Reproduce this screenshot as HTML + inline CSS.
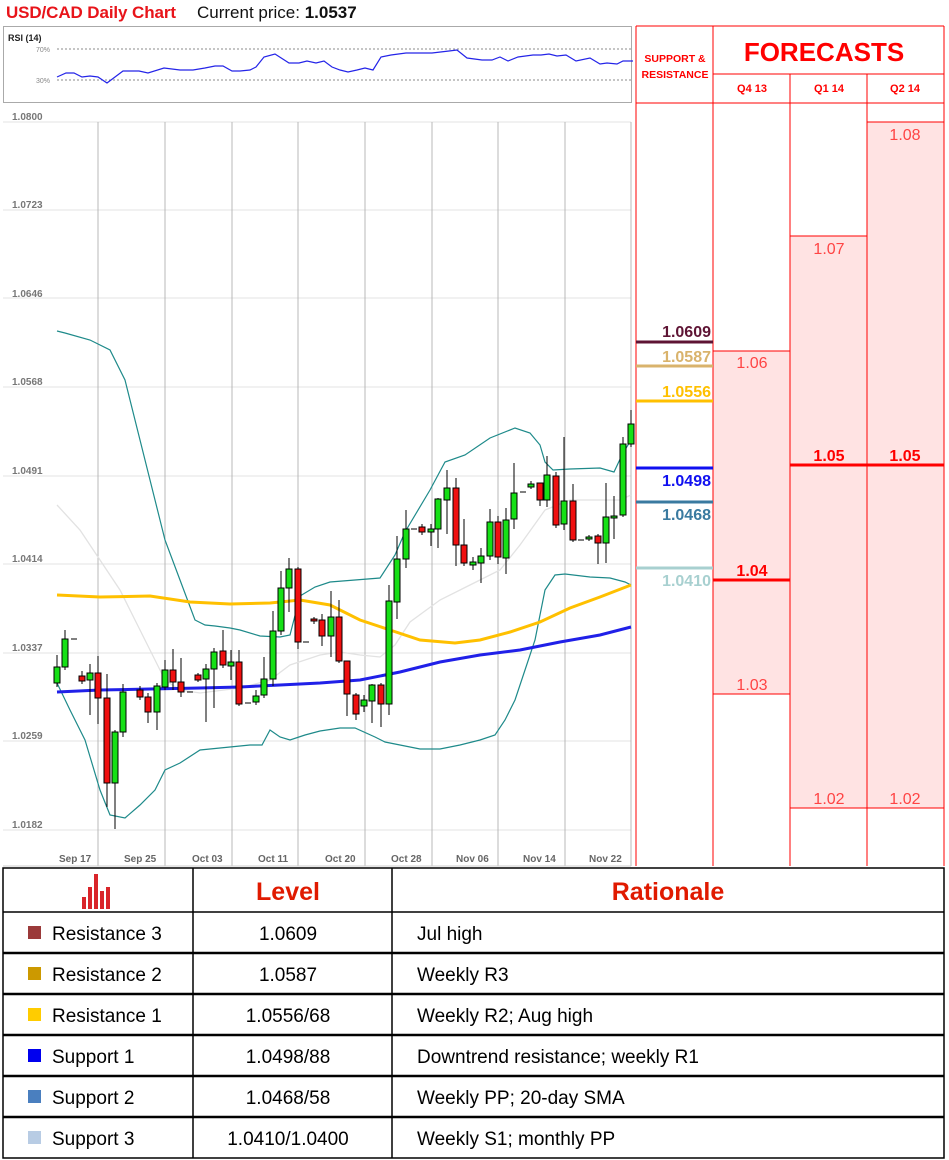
<!DOCTYPE html>
<html><head><meta charset="utf-8"><style>
body{margin:0;background:#fff;width:949px;height:1160px;overflow:hidden;font-family:"Liberation Sans",sans-serif}
svg{position:absolute;left:0;top:0}
</style></head><body>
<svg width="949" height="1160" viewBox="0 0 949 1160" xmlns="http://www.w3.org/2000/svg" font-family="Liberation Sans, sans-serif">
<text x="6" y="18" font-size="17" fill="#e8141a" font-weight="bold" textLength="170">USD/CAD Daily Chart</text>
<text x="197" y="18" font-size="17" fill="#111">Current price: <tspan font-weight="bold">1.0537</tspan></text>
<!-- RSI -->
<rect x="3.5" y="26.5" width="628" height="76" fill="#fff" stroke="#aaa"/>
<text x="8" y="41" font-size="9" font-weight="bold" fill="#222">RSI (14)</text>
<text x="36" y="52" font-size="7" fill="#888">70%</text>
<text x="36" y="83" font-size="7" fill="#888">30%</text>
<line x1="57" y1="49" x2="631" y2="49" stroke="#666" stroke-dasharray="2,2" stroke-width="0.8"/>
<line x1="57" y1="80" x2="631" y2="80" stroke="#666" stroke-dasharray="2,2" stroke-width="0.8"/>
<polyline fill="none" stroke="#2424e8" stroke-width="1.2" points="57,77 66,73 74,73 82,77 90,76 98,77 107,83 123,71 139,71 148,73 164,68 180,70 193,70 205,68 215,66 223,66 232,71 240,71 250,70 256,67 264,57 275,54 289,63 299,63 307,61 316,63 324,61 332,67 340,70 348,72 357,70 365,68 373,70 381,57 391,55 406,53 418,53 432,53 449,51 457,50 467,58 482,60 492,60 500,57 508,61 518,57 533,55 541,55 549,54 557,56 566,55 576,61 590,58 600,64 607,63 617,64 623,61 633,61"/>
<!-- chart grid -->
<g stroke="#e3e3e3" stroke-width="1">
<line x1="3" y1="122" x2="631" y2="122"/><line x1="3" y1="210" x2="631" y2="210"/><line x1="3" y1="298" x2="631" y2="298"/><line x1="3" y1="387" x2="631" y2="387"/><line x1="3" y1="476" x2="631" y2="476"/><line x1="3" y1="564" x2="631" y2="564"/><line x1="3" y1="653" x2="631" y2="653"/><line x1="3" y1="741" x2="631" y2="741"/><line x1="3" y1="830" x2="631" y2="830"/>
</g>
<g stroke="#b8b8b8" stroke-width="1">
<line x1="98" y1="122" x2="98" y2="866"/><line x1="165" y1="122" x2="165" y2="866"/><line x1="232" y1="122" x2="232" y2="866"/><line x1="298" y1="122" x2="298" y2="866"/><line x1="365" y1="122" x2="365" y2="866"/><line x1="432" y1="122" x2="432" y2="866"/><line x1="498" y1="122" x2="498" y2="866"/><line x1="565" y1="122" x2="565" y2="866"/><line x1="631" y1="122" x2="631" y2="866"/>
</g>
<line x1="3" y1="866" x2="631" y2="866" stroke="#ccc"/>
<g font-size="10" fill="#777" font-weight="bold">
<text x="12" y="120">1.0800</text><text x="12" y="208">1.0723</text><text x="12" y="297">1.0646</text><text x="12" y="385">1.0568</text><text x="12" y="474">1.0491</text><text x="12" y="562">1.0414</text><text x="12" y="651">1.0337</text><text x="12" y="739">1.0259</text><text x="12" y="828">1.0182</text>
</g>
<g font-size="10" fill="#666" font-weight="bold">
<text x="59" y="862">Sep 17</text><text x="124" y="862">Sep 25</text><text x="192" y="862">Oct 03</text><text x="258" y="862">Oct 11</text><text x="325" y="862">Oct 20</text><text x="391" y="862">Oct 28</text><text x="456" y="862">Nov 06</text><text x="523" y="862">Nov 14</text><text x="589" y="862">Nov 22</text>
</g>
<!-- indicators -->
<polyline fill="none" stroke="#e2e2e2" stroke-width="1.3" points="57,505 80,530 100,560 120,590 140,630 155,660 165,680 180,690 200,693 240,688 270,680 290,665 320,655 340,652 360,655 380,657 395,645 410,622 440,600 470,585 500,570 520,545 545,510 570,500 600,500 620,500 631,495"/>
<polyline fill="none" stroke="#1e8a8a" stroke-width="1.2" points="57,331 65,333 90,340 110,350 125,380 140,440 155,500 165,540 180,580 195,620 205,625 215,626 230,628 240,630 260,636 280,637 290,635 300,596 315,587 330,582 355,580 380,578 395,555 405,532 430,490 445,462 465,455 490,438 515,428 530,433 540,445 545,462 553,470 570,469 600,468 614,472 622,455 631,440"/>
<polyline fill="none" stroke="#1e8a8a" stroke-width="1.2" points="57,683 70,710 85,740 100,790 110,815 125,818 140,805 155,790 165,770 180,763 200,750 220,748 250,745 262,745 270,730 280,737 290,740 305,735 320,731 340,728 355,728 375,737 385,742 400,745 420,749 440,749 460,745 480,740 495,735 505,720 515,700 525,670 535,640 545,590 555,575 565,574 590,577 610,578 625,582 631,585"/>
<polyline fill="none" stroke="#ffc000" stroke-width="3" points="57,595 100,597 150,596 190,602 230,604 270,603 300,600 330,605 360,620 390,630 420,640 455,643 480,640 510,632 540,622 570,608 600,597 631,585"/>
<polyline fill="none" stroke="#2020e8" stroke-width="3" points="57,692 100,690 150,689 200,688 240,687 280,685 320,683 360,680 400,672 440,662 480,655 520,650 560,642 600,635 631,627"/>
<!-- candles -->
<g stroke="#000" stroke-width="1">
<line x1="57" y1="655" x2="57" y2="687"/><line x1="65" y1="630" x2="65" y2="670"/><line x1="82" y1="671" x2="82" y2="684"/><line x1="90" y1="664" x2="90" y2="715"/><line x1="98" y1="656" x2="98" y2="724"/><line x1="107" y1="674" x2="107" y2="807"/><line x1="115" y1="730" x2="115" y2="829"/><line x1="123" y1="684" x2="123" y2="737"/><line x1="140" y1="686" x2="140" y2="700"/><line x1="148" y1="693" x2="148" y2="723"/><line x1="157" y1="683" x2="157" y2="730"/><line x1="165" y1="660" x2="165" y2="690"/><line x1="173" y1="649" x2="173" y2="690"/><line x1="181" y1="658" x2="181" y2="697"/><line x1="198" y1="673" x2="198" y2="682"/><line x1="206" y1="664" x2="206" y2="722"/><line x1="214" y1="648" x2="214" y2="708"/><line x1="223" y1="630" x2="223" y2="668"/><line x1="231" y1="650" x2="231" y2="680"/><line x1="239" y1="650" x2="239" y2="706"/><line x1="256" y1="690" x2="256" y2="705"/><line x1="264" y1="657" x2="264" y2="698"/><line x1="273" y1="611" x2="273" y2="686"/><line x1="281" y1="571" x2="281" y2="635"/><line x1="289" y1="558" x2="289" y2="612"/><line x1="298" y1="567" x2="298" y2="649"/><line x1="314" y1="617" x2="314" y2="624"/><line x1="322" y1="614" x2="322" y2="646"/><line x1="331" y1="591" x2="331" y2="657"/><line x1="339" y1="600" x2="339" y2="663"/><line x1="347" y1="661" x2="347" y2="716"/><line x1="356" y1="693" x2="356" y2="720"/><line x1="364" y1="695" x2="364" y2="712"/><line x1="372" y1="684" x2="372" y2="723"/><line x1="381" y1="683" x2="381" y2="727"/><line x1="389" y1="585" x2="389" y2="715"/><line x1="397" y1="536" x2="397" y2="619"/><line x1="406" y1="510" x2="406" y2="568"/><line x1="422" y1="524" x2="422" y2="535"/><line x1="431" y1="524" x2="431" y2="546"/><line x1="438" y1="498" x2="438" y2="548"/><line x1="447" y1="470" x2="447" y2="534"/><line x1="456" y1="478" x2="456" y2="566"/><line x1="464" y1="519" x2="464" y2="566"/><line x1="473" y1="557" x2="473" y2="570"/><line x1="481" y1="548" x2="481" y2="583"/><line x1="490" y1="509" x2="490" y2="560"/><line x1="498" y1="516" x2="498" y2="564"/><line x1="506" y1="508" x2="506" y2="574"/><line x1="514" y1="463" x2="514" y2="529"/><line x1="531" y1="481" x2="531" y2="489"/><line x1="540" y1="483" x2="540" y2="506"/><line x1="547" y1="456" x2="547" y2="507"/><line x1="556" y1="472" x2="556" y2="528"/><line x1="564" y1="437" x2="564" y2="530"/><line x1="573" y1="484" x2="573" y2="542"/><line x1="589" y1="535" x2="589" y2="541"/><line x1="598" y1="534" x2="598" y2="564"/><line x1="606" y1="483" x2="606" y2="563"/><line x1="614" y1="496" x2="614" y2="539"/><line x1="623" y1="437" x2="623" y2="517"/><line x1="631" y1="410" x2="631" y2="447"/>
<line x1="71" y1="639" x2="77" y2="639"/><line x1="187" y1="692" x2="193" y2="692"/><line x1="245" y1="703" x2="251" y2="703"/><line x1="303" y1="642" x2="309" y2="642"/><line x1="411" y1="529" x2="417" y2="529"/><line x1="520" y1="492" x2="526" y2="492"/><line x1="578" y1="540" x2="584" y2="540"/>
</g>
<g stroke="#000" stroke-width="1" fill="#16e016">
<rect x="54" y="667" width="6" height="16"/><rect x="62" y="639" width="6" height="28"/><rect x="87" y="673" width="6" height="7"/><rect x="112" y="732" width="6" height="51"/><rect x="120" y="692" width="6" height="40"/><rect x="154" y="686" width="6" height="26"/><rect x="162" y="670" width="6" height="17"/><rect x="203" y="669" width="6" height="10"/><rect x="211" y="652" width="6" height="17"/><rect x="228" y="662" width="6" height="4"/><rect x="253" y="696" width="6" height="6"/><rect x="261" y="679" width="6" height="16"/><rect x="270" y="631" width="6" height="48"/><rect x="278" y="588" width="6" height="43"/><rect x="286" y="569" width="6" height="19"/><rect x="328" y="617" width="6" height="19"/><rect x="361" y="700" width="6" height="6"/><rect x="369" y="685" width="6" height="16"/><rect x="386" y="601" width="6" height="103"/><rect x="394" y="559" width="6" height="43"/><rect x="403" y="529" width="6" height="30"/><rect x="428" y="529" width="6" height="3"/><rect x="435" y="499" width="6" height="30"/><rect x="444" y="488" width="6" height="12"/><rect x="470" y="562" width="6" height="3"/><rect x="478" y="556" width="6" height="7"/><rect x="487" y="522" width="6" height="34"/><rect x="503" y="520" width="6" height="38"/><rect x="511" y="493" width="6" height="26"/><rect x="528" y="484" width="6" height="3"/><rect x="544" y="475" width="6" height="25"/><rect x="561" y="501" width="6" height="23"/><rect x="586" y="537" width="6" height="2"/><rect x="603" y="517" width="6" height="26"/><rect x="611" y="516" width="6" height="2"/><rect x="620" y="444" width="6" height="71"/><rect x="628" y="424" width="6" height="20"/>
</g>
<g stroke="#000" stroke-width="1" fill="#f01010">
<rect x="79" y="676" width="6" height="5"/><rect x="95" y="673" width="6" height="25"/><rect x="104" y="698" width="6" height="85"/><rect x="137" y="690" width="6" height="7"/><rect x="145" y="697" width="6" height="15"/><rect x="170" y="670" width="6" height="12"/><rect x="178" y="682" width="6" height="10"/><rect x="195" y="675" width="6" height="5"/><rect x="220" y="651" width="6" height="14"/><rect x="236" y="662" width="6" height="42"/><rect x="295" y="569" width="6" height="73"/><rect x="311" y="619" width="6" height="2"/><rect x="319" y="620" width="6" height="16"/><rect x="336" y="617" width="6" height="44"/><rect x="344" y="661" width="6" height="33"/><rect x="353" y="695" width="6" height="19"/><rect x="378" y="685" width="6" height="19"/><rect x="419" y="527" width="6" height="5"/><rect x="453" y="488" width="6" height="57"/><rect x="461" y="545" width="6" height="18"/><rect x="495" y="522" width="6" height="35"/><rect x="537" y="483" width="6" height="17"/><rect x="553" y="476" width="6" height="49"/><rect x="570" y="501" width="6" height="39"/><rect x="595" y="536" width="6" height="7"/>
</g>
<!-- right panel -->
<rect x="713" y="351" width="77" height="343" fill="#ffe3e3" stroke="#f00"/>
<rect x="790" y="236" width="77" height="572" fill="#ffe3e3" stroke="#f00"/>
<rect x="867" y="122" width="77" height="686" fill="#ffe3e3" stroke="#f00"/>
<g stroke="#f00" stroke-width="1" fill="none">
<line x1="636" y1="26" x2="944" y2="26"/><line x1="713" y1="74" x2="944" y2="74"/><line x1="636" y1="103" x2="944" y2="103"/>
<line x1="636" y1="26" x2="636" y2="866"/><line x1="713" y1="26" x2="713" y2="866"/><line x1="790" y1="74" x2="790" y2="866"/><line x1="867" y1="74" x2="867" y2="866"/><line x1="944" y1="26" x2="944" y2="866"/>
</g>
<text x="824" y="61" font-size="26" font-weight="bold" fill="#f00" text-anchor="middle">FORECASTS</text>
<text x="675" y="62" font-size="10.5" font-weight="bold" fill="#f00" text-anchor="middle">SUPPORT &amp;</text>
<text x="675" y="78" font-size="10.5" font-weight="bold" fill="#f00" text-anchor="middle">RESISTANCE</text>
<g font-size="11" font-weight="bold" fill="#f00" text-anchor="middle"><text x="752" y="92">Q4 13</text><text x="829" y="92">Q1 14</text><text x="905" y="92">Q2 14</text></g>
<g font-size="16" fill="#f44" text-anchor="middle"><text x="752" y="368">1.06</text><text x="752" y="690">1.03</text><text x="829" y="254">1.07</text><text x="829" y="804">1.02</text><text x="905" y="140">1.08</text><text x="905" y="804">1.02</text></g>
<g font-size="16" font-weight="bold" fill="#f00" text-anchor="middle"><text x="752" y="576">1.04</text><text x="829" y="461">1.05</text><text x="905" y="461">1.05</text></g>
<line x1="713" y1="580" x2="790" y2="580" stroke="#f00" stroke-width="3"/>
<line x1="790" y1="465" x2="944" y2="465" stroke="#f00" stroke-width="3"/>
<g stroke-width="3">
<line x1="636" y1="342" x2="713" y2="342" stroke="#5e1434"/>
<line x1="636" y1="366" x2="713" y2="366" stroke="#d9b36c"/>
<line x1="636" y1="401" x2="713" y2="401" stroke="#ffc000"/>
<line x1="636" y1="468" x2="713" y2="468" stroke="#1010f0"/>
<line x1="636" y1="502" x2="713" y2="502" stroke="#3a7aa0"/>
<line x1="636" y1="568" x2="713" y2="568" stroke="#a8d0d0"/>
</g>
<g font-size="16" font-weight="bold" text-anchor="end">
<text x="711" y="337" fill="#5e1434">1.0609</text>
<text x="711" y="362" fill="#d9b36c">1.0587</text>
<text x="711" y="397" fill="#ffc000">1.0556</text>
<text x="711" y="486" fill="#1010f0">1.0498</text>
<text x="711" y="520" fill="#3a7aa0">1.0468</text>
<text x="711" y="586" fill="#a8d0d0">1.0410</text>
</g>
<!-- table -->
<g stroke="#000" fill="none">
<rect x="3" y="868" width="941" height="290" stroke-width="1.5"/>
<line x1="3" y1="912" x2="944" y2="912" stroke-width="1.5"/>
<line x1="3" y1="953" x2="944" y2="953" stroke-width="2.5"/>
<line x1="3" y1="994" x2="944" y2="994" stroke-width="2.5"/>
<line x1="3" y1="1035" x2="944" y2="1035" stroke-width="2.5"/>
<line x1="3" y1="1076" x2="944" y2="1076" stroke-width="2.5"/>
<line x1="3" y1="1117" x2="944" y2="1117" stroke-width="2.5"/>
<line x1="193" y1="868" x2="193" y2="1158" stroke-width="1.5"/>
<line x1="392" y1="868" x2="392" y2="1158" stroke-width="1.5"/>
</g>
<g fill="#d9252a"><rect x="82" y="897" width="4" height="12"/><rect x="88" y="887" width="4" height="22"/><rect x="94" y="874" width="4" height="35"/><rect x="100" y="891" width="4" height="18"/><rect x="106" y="887" width="4" height="22"/></g>
<text x="288" y="900" font-size="25" font-weight="bold" fill="#e01a00" text-anchor="middle">Level</text>
<text x="668" y="900" font-size="25" font-weight="bold" fill="#e01a00" text-anchor="middle">Rationale</text>
<g font-size="19" fill="#000">
<rect x="28" y="926" width="13" height="13" fill="#9b3a3a"/><text x="52" y="940">Resistance 3</text><text x="288" y="940" text-anchor="middle">1.0609</text><text x="417" y="940">Jul high</text>
<rect x="28" y="967" width="13" height="13" fill="#cc9900"/><text x="52" y="981">Resistance 2</text><text x="288" y="981" text-anchor="middle">1.0587</text><text x="417" y="981">Weekly R3</text>
<rect x="28" y="1008" width="13" height="13" fill="#ffcc00"/><text x="52" y="1022">Resistance 1</text><text x="288" y="1022" text-anchor="middle">1.0556/68</text><text x="417" y="1022">Weekly R2; Aug high</text>
<rect x="28" y="1049" width="13" height="13" fill="#0000ee"/><text x="52" y="1063">Support 1</text><text x="288" y="1063" text-anchor="middle">1.0498/88</text><text x="417" y="1063">Downtrend resistance; weekly R1</text>
<rect x="28" y="1090" width="13" height="13" fill="#4a7fbf"/><text x="52" y="1104">Support 2</text><text x="288" y="1104" text-anchor="middle">1.0468/58</text><text x="417" y="1104">Weekly PP; 20-day SMA</text>
<rect x="28" y="1131" width="13" height="13" fill="#b8cce4"/><text x="52" y="1145">Support 3</text><text x="288" y="1145" text-anchor="middle">1.0410/1.0400</text><text x="417" y="1145">Weekly S1; monthly PP</text>
</g>
</svg>
</body></html>
